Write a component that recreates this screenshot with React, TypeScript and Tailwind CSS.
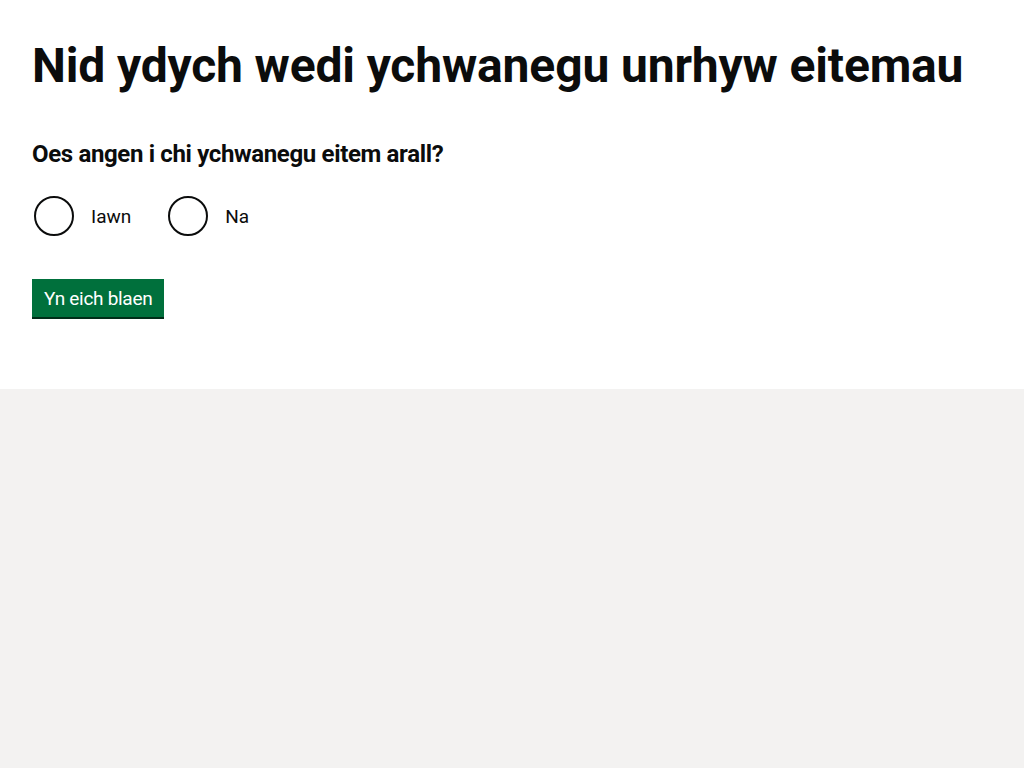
import React from 'react';

const App = () => {
  return (
    <div className="min-h-[768px] flex flex-col bg-[#f3f2f1] text-[#0b0c0c] font-['Roboto',Arial,sans-serif]">
      <main className="bg-white px-8 pt-[41px] pb-[72px]">
        <h1 className="text-[48px] leading-[50px] font-bold tracking-[-0.15px] mb-[48px]">
          Nid ydych wedi ychwanegu unrhyw eitemau
        </h1>
        <form>
          <fieldset>
            <legend className="text-[24px] leading-[30px] font-bold tracking-[-0.35px] mb-[27px]">
              Oes angen i chi ychwanegu eitem arall?
            </legend>
            <div className="flex items-center">
              <label className="flex items-center mr-5">
                <span className="w-10 h-10 rounded-full border-2 border-[#0b0c0c] ml-[2px] mr-[2px]" />
                <span className="text-[19px] leading-[25px] px-[15px] py-[5px]">Iawn</span>
              </label>
              <label className="flex items-center">
                <span className="w-10 h-10 rounded-full border-2 border-[#0b0c0c] ml-[2px] mr-[2px]" />
                <span className="text-[19px] leading-[25px] px-[15px] py-[5px]">Na</span>
              </label>
            </div>
          </fieldset>
          <button
            type="button"
            className="mt-[43px] bg-[#00703c] text-white text-[19px] leading-[19px] tracking-[-0.3px] border-2 border-transparent px-[10px] pt-[8px] pb-[7px] shadow-[0_2px_0_#002d18]"
          >
            Yn eich blaen
          </button>
        </form>
      </main>
      <div className="flex-1" />
    </div>
  );
};

export default App;
